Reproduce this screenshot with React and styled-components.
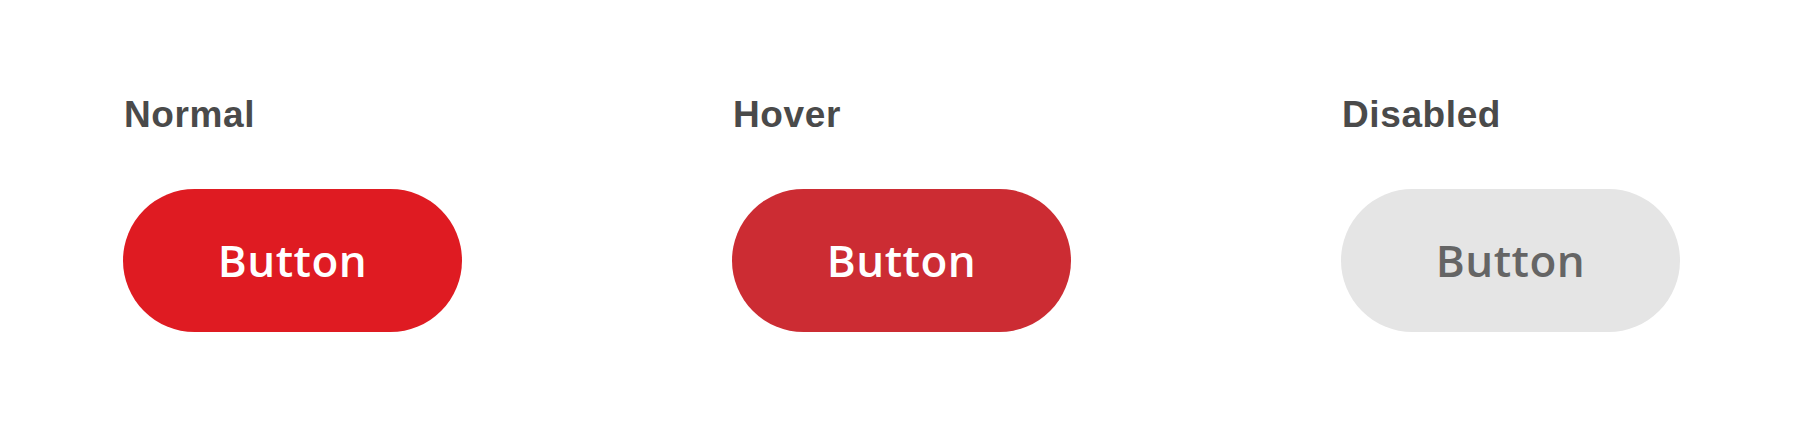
import React from 'react';
import styled, { createGlobalStyle } from 'styled-components';

const GlobalStyle = createGlobalStyle`
  body {
    margin: 0;
    background: #ffffff;
  }
`;

const Page = styled.div`
  display: flex;
  gap: 270px;
  padding: 96px 0 0 123px;
  height: 423px;
  box-sizing: border-box;
`;

const Column = styled.div`
  display: flex;
  flex-direction: column;
  width: 339px;
`;

const Label = styled.h3`
  margin: 0 0 56px 1px;
  font-family: "Liberation Sans", Arial, sans-serif;
  font-weight: 700;
  font-size: 37px;
  line-height: 37px;
  letter-spacing: 0.6px;
  color: #4a4a4a;
`;

const variants = {
  normal: { bg: '#df1b22', fg: '#ffffff' },
  hover: { bg: '#cc2c33', fg: '#ffffff' },
  disabled: { bg: '#e5e5e5', fg: '#656565' },
};

const Button = styled.button`
  display: flex;
  align-items: center;
  justify-content: center;
  width: 339px;
  height: 143px;
  border: none;
  border-radius: 72px;
  padding: 0 0 2px;
  background: ${(p) => variants[p.$variant].bg};
  color: ${(p) => variants[p.$variant].fg};
  font-family: "Open Sans", Lato, sans-serif;
  font-weight: 600;
  font-size: 44px;
  letter-spacing: 0.5px;
  cursor: ${(p) => (p.$variant === 'disabled' ? 'default' : 'pointer')};
`;

const states = [
  { label: 'Normal', variant: 'normal' },
  { label: 'Hover', variant: 'hover' },
  { label: 'Disabled', variant: 'disabled' },
];

export default function App() {
  return (
    <>
      <GlobalStyle />
      <Page>
        {states.map((s) => (
          <Column key={s.variant}>
            <Label>{s.label}</Label>
            <Button $variant={s.variant} disabled={s.variant === 'disabled'}>
              Button
            </Button>
          </Column>
        ))}
      </Page>
    </>
  );
}
